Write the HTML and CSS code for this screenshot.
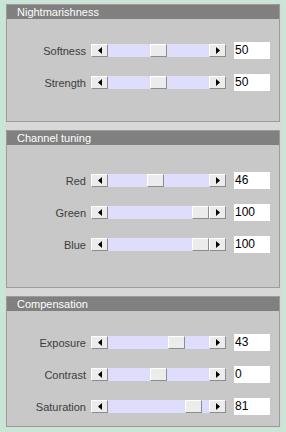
FILE: index.html
```html
<!DOCTYPE html>
<html>
<head>
<meta charset="utf-8">
<link rel="stylesheet" href="styles.css">
</head>
<body>
<div class="frame">
  <section class="panel p1">
    <div class="head">Nightmarishness</div>
    <div class="body">
      <div class="row"><span class="label">Softness</span><div class="slider"><span class="btn"><svg width="4" height="7" viewBox="0 0 4 7"><polygon points="4,0 4,7 0,3.5" fill="#000"/></svg></span><div class="track"><span class="thumb" style="left:42px"></span></div><span class="btn"><svg width="4" height="7" viewBox="0 0 4 7"><polygon points="0,0 0,7 4,3.5" fill="#000"/></svg></span></div><div class="val">50</div></div>
      <div class="row"><span class="label">Strength</span><div class="slider"><span class="btn"><svg width="4" height="7" viewBox="0 0 4 7"><polygon points="4,0 4,7 0,3.5" fill="#000"/></svg></span><div class="track"><span class="thumb" style="left:42px"></span></div><span class="btn"><svg width="4" height="7" viewBox="0 0 4 7"><polygon points="0,0 0,7 4,3.5" fill="#000"/></svg></span></div><div class="val">50</div></div>
    </div>
  </section>
  <section class="panel p2">
    <div class="head">Channel tuning</div>
    <div class="body">
      <div class="row"><span class="label">Red</span><div class="slider"><span class="btn"><svg width="4" height="7" viewBox="0 0 4 7"><polygon points="4,0 4,7 0,3.5" fill="#000"/></svg></span><div class="track"><span class="thumb" style="left:39px"></span></div><span class="btn"><svg width="4" height="7" viewBox="0 0 4 7"><polygon points="0,0 0,7 4,3.5" fill="#000"/></svg></span></div><div class="val">46</div></div>
      <div class="row"><span class="label">Green</span><div class="slider"><span class="btn"><svg width="4" height="7" viewBox="0 0 4 7"><polygon points="4,0 4,7 0,3.5" fill="#000"/></svg></span><div class="track"><span class="thumb" style="left:84px"></span></div><span class="btn"><svg width="4" height="7" viewBox="0 0 4 7"><polygon points="0,0 0,7 4,3.5" fill="#000"/></svg></span></div><div class="val">100</div></div>
      <div class="row"><span class="label">Blue</span><div class="slider"><span class="btn"><svg width="4" height="7" viewBox="0 0 4 7"><polygon points="4,0 4,7 0,3.5" fill="#000"/></svg></span><div class="track"><span class="thumb" style="left:84px"></span></div><span class="btn"><svg width="4" height="7" viewBox="0 0 4 7"><polygon points="0,0 0,7 4,3.5" fill="#000"/></svg></span></div><div class="val">100</div></div>
    </div>
  </section>
  <section class="panel p3">
    <div class="head">Compensation</div>
    <div class="body">
      <div class="row"><span class="label">Exposure</span><div class="slider"><span class="btn"><svg width="4" height="7" viewBox="0 0 4 7"><polygon points="4,0 4,7 0,3.5" fill="#000"/></svg></span><div class="track"><span class="thumb" style="left:60px"></span></div><span class="btn"><svg width="4" height="7" viewBox="0 0 4 7"><polygon points="0,0 0,7 4,3.5" fill="#000"/></svg></span></div><div class="val">43</div></div>
      <div class="row"><span class="label">Contrast</span><div class="slider"><span class="btn"><svg width="4" height="7" viewBox="0 0 4 7"><polygon points="4,0 4,7 0,3.5" fill="#000"/></svg></span><div class="track"><span class="thumb" style="left:42px"></span></div><span class="btn"><svg width="4" height="7" viewBox="0 0 4 7"><polygon points="0,0 0,7 4,3.5" fill="#000"/></svg></span></div><div class="val">0</div></div>
      <div class="row"><span class="label">Saturation</span><div class="slider"><span class="btn"><svg width="4" height="7" viewBox="0 0 4 7"><polygon points="4,0 4,7 0,3.5" fill="#000"/></svg></span><div class="track"><span class="thumb" style="left:77px"></span></div><span class="btn"><svg width="4" height="7" viewBox="0 0 4 7"><polygon points="0,0 0,7 4,3.5" fill="#000"/></svg></span></div><div class="val">81</div></div>
    </div>
  </section>
</div>
</body>
</html>
```

FILE: styles.css
```css
html, body {
  margin: 0;
  padding: 0;
  background: #c8e6d6;
  font-family: "Liberation Sans", Arial, sans-serif;
}
.frame {
  margin: 3px 0 0 5px;
  width: 276px;
  padding: 1px 0 1px 1px;
  background: #d8d8d8;
  display: flex;
  flex-direction: column;
  gap: 8px;
}
.panel {
  width: 272px;
  background: #c8c8c8;
  border: 1px solid #9c9c9c;
}
.head {
  height: 14px;
  line-height: 14px;
  background: #808080;
  color: #fff;
  font-size: 11px;
  padding-left: 10px;
}
.body {
  display: flex;
  flex-direction: column;
  gap: 15px;
}
.p1 .body { padding: 23px 0 30px; }
.p2 .body { padding: 27px 0 34px; }
.p3 .body { padding: 23px 0 11px; }
.row {
  display: flex;
  align-items: center;
  height: 17px;
}
.label {
  width: 79px;
  margin-right: 5px;
  text-align: right;
  font-size: 11px;
  color: #3c3c3c;
}
.slider {
  display: flex;
  height: 13px;
}
.btn {
  box-sizing: border-box;
  width: 17px;
  height: 13px;
  background: #ececec;
  border-top: 1px solid #fff;
  border-left: 1px solid #fff;
  border-right: 1px solid #8c8c8c;
  border-bottom: 1px solid #8c8c8c;
  display: flex;
  align-items: center;
  justify-content: center;
}
.btn svg { display: block; }
.track {
  position: relative;
  width: 101px;
  height: 13px;
  background: #dedefc;
}
.thumb {
  position: absolute;
  top: 0;
  box-sizing: border-box;
  width: 17px;
  height: 13px;
  background: #ececec;
  border-top: 1px solid #fff;
  border-left: 1px solid #fff;
  border-right: 1px solid #8c8c8c;
  border-bottom: 1px solid #8c8c8c;
}
.val {
  box-sizing: border-box;
  margin-left: 8px;
  width: 36px;
  height: 17px;
  background: #fff;
  font-size: 12px;
  line-height: 17px;
  padding-left: 1px;
  color: #000;
}
```
